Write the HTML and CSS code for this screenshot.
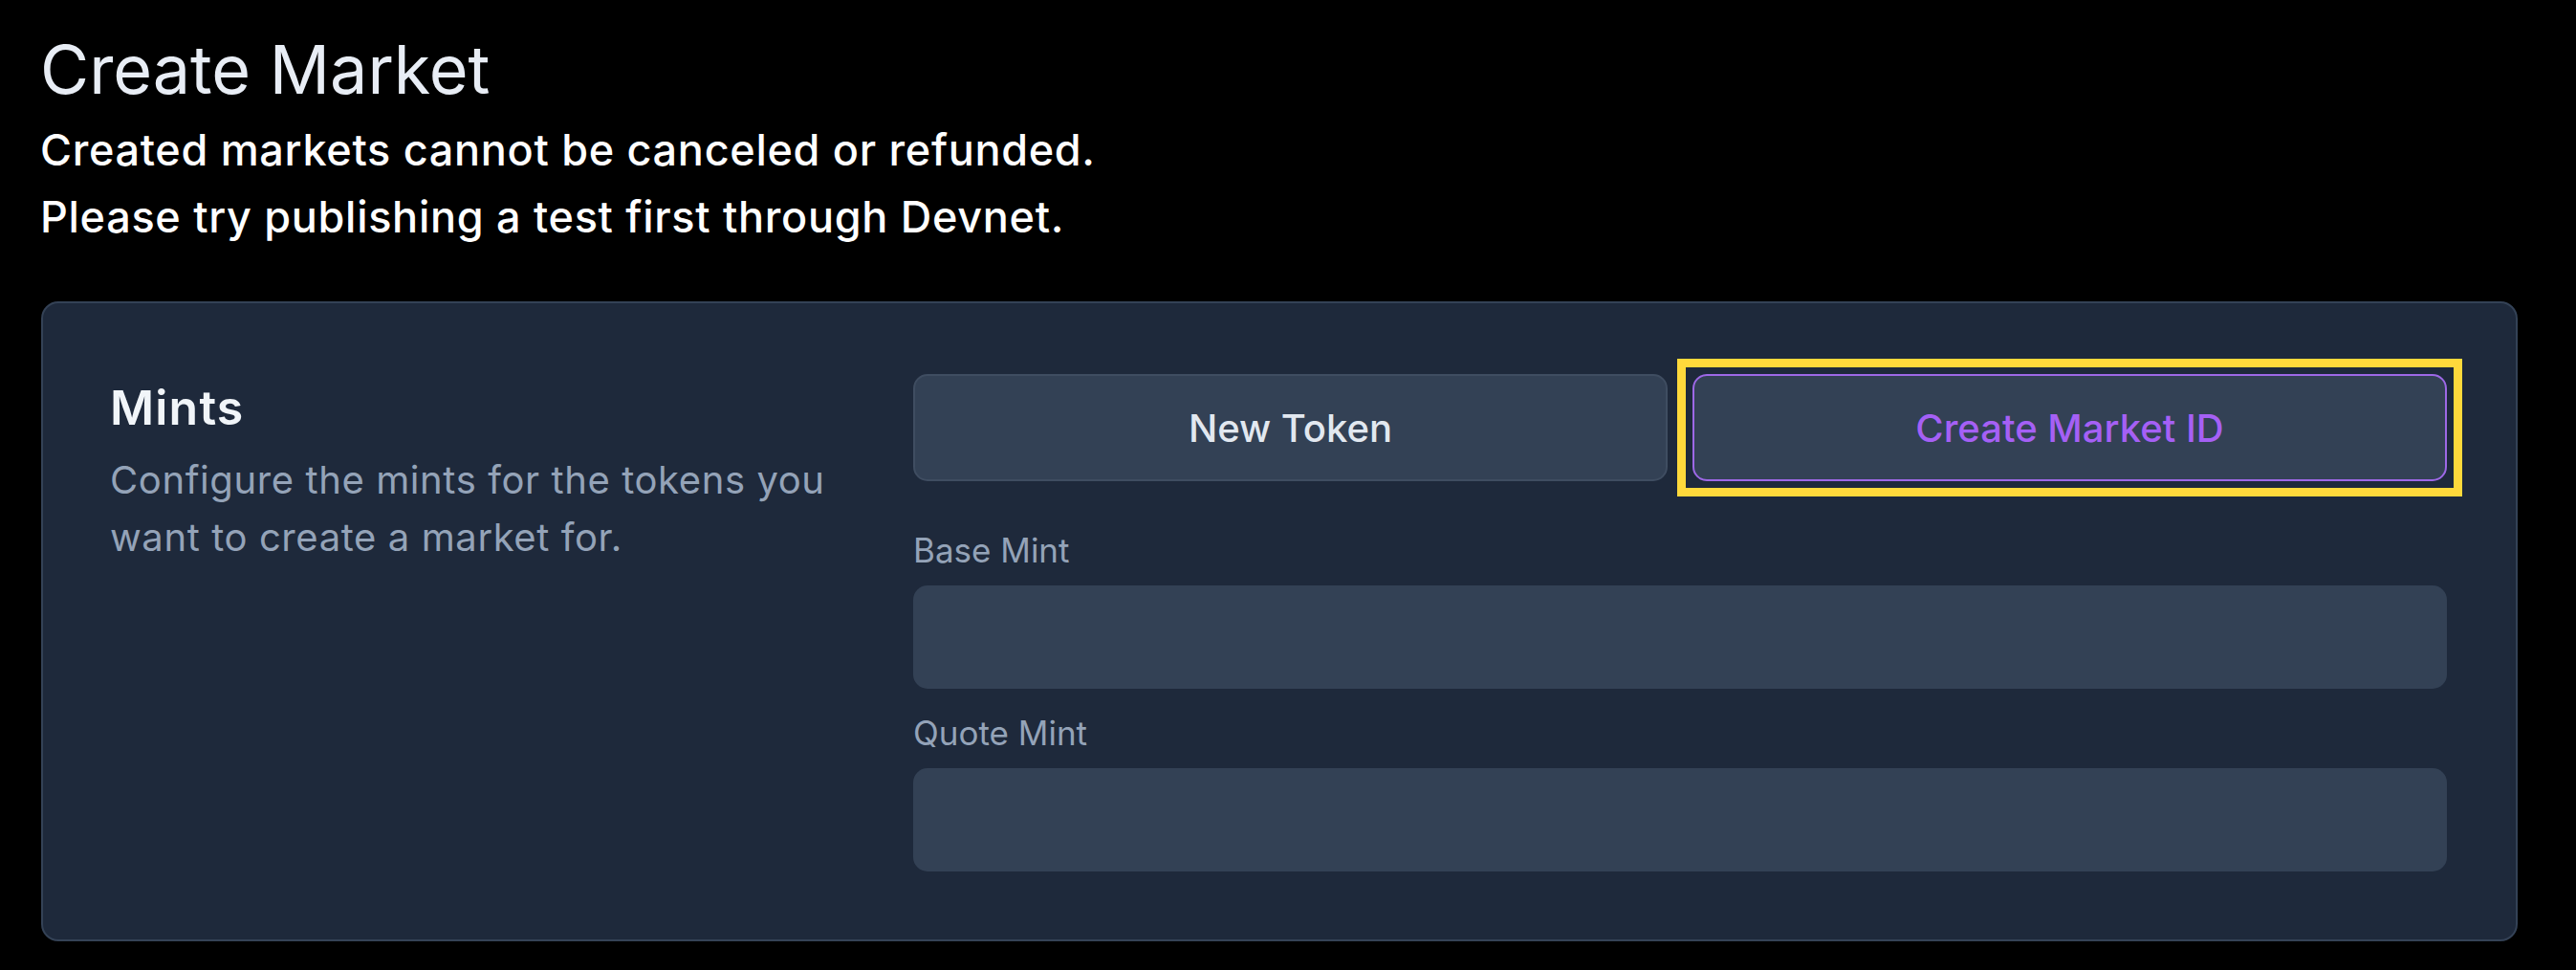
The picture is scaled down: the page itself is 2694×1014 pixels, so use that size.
FILE: index.html
```html
<!DOCTYPE html>
<html lang="en">
<head>
<meta charset="utf-8">
<title>Create Market</title>
<link rel="stylesheet" href="styles.css">
</head>
<body>
<main class="page">
  <header class="intro">
    <h1 class="title">Create Market</h1>
    <p class="notice">Created markets cannot be canceled or refunded.<br>Please try publishing a test first through Devnet.</p>
  </header>

  <section class="card">
    <div class="card-info">
      <h2 class="card-title">Mints</h2>
      <p class="card-desc">Configure the mints for the tokens you want to create a market for.</p>
    </div>
    <div class="card-body">
      <div class="button-row">
        <button class="btn" type="button">New Token</button>
        <div class="focus-ring">
          <button class="btn btn-active" type="button">Create Market ID</button>
        </div>
      </div>
      <div class="field field-first">
        <label class="field-label" for="base-mint">Base Mint</label>
        <input class="field-input" id="base-mint" type="text">
      </div>
      <div class="field">
        <label class="field-label" for="quote-mint">Quote Mint</label>
        <input class="field-input" id="quote-mint" type="text">
      </div>
    </div>
  </section>
</main>
</body>
</html>
```

FILE: styles.css
```css
* {
  box-sizing: border-box;
}

html, body {
  margin: 0;
  padding: 0;
  background: #000000;
}

body {
  font-family: Inter, "Noto Sans", "Liberation Sans", sans-serif;
  color: #f1f5f9;
  width: 2694px;
  height: 1014px;
  overflow: hidden;
}

.page {
  padding: 31px 61px 0 42px;
}

.intro {
  margin: 0;
}

.title {
  margin: 0;
  font-size: 70px;
  line-height: 84px;
  font-weight: 400;
  color: #e8edf5;
  letter-spacing: 0;
}

.notice {
  margin: 7px 0 0 0;
  font-size: 45px;
  line-height: 70px;
  font-weight: 500;
  color: #ffffff;
  letter-spacing: 0.7px;
}

.card {
  margin-top: 53px;
  margin-left: 1px;
  background: #1e293b;
  border: 2px solid #344256;
  border-radius: 18px;
  padding: 74px 72px 71px 70px;
  display: grid;
  grid-template-columns: repeat(3, 1fr);
  column-gap: 76px;
}

.card-info {
  grid-column: span 1;
}

.card-title {
  margin: 0;
  font-size: 50px;
  line-height: 70px;
  font-weight: 600;
  color: #f1f5f9;
  letter-spacing: 1.2px;
}

.card-desc {
  margin: 11px 0 0 0;
  font-size: 40px;
  line-height: 60px;
  font-weight: 400;
  color: #94a3b8;
  letter-spacing: 0.6px;
}

.card-body {
  grid-column: span 2;
  display: flex;
  flex-direction: column;
}

.button-row {
  display: grid;
  grid-template-columns: 1fr 1fr;
  column-gap: 26px;
}

.btn {
  width: 100%;
  height: 112px;
  border-radius: 15px;
  background: #334155;
  border: 2px solid #3f4d61;
  color: #e2e8f0;
  font-family: inherit;
  font-size: 40px;
  font-weight: 500;
  cursor: pointer;
  display: block;
}

.focus-ring {
  margin: -16px;
  padding: 7px;
  border: 9px solid #ffd93b;
}

.btn-active {
  color: #a560f5;
  border-color: #9d68e6;
}

.field {
  display: flex;
  flex-direction: column;
  margin-top: 21px;
}

.field-first {
  margin-top: 47px;
}

.field-label {
  font-size: 35px;
  line-height: 50px;
  color: #94a3b8;
  margin-bottom: 12px;
}

.field-input {
  height: 108px;
  border: none;
  border-radius: 15px;
  background: #334155;
  color: #e2e8f0;
  font-family: inherit;
  font-size: 38px;
  padding: 0 28px;
  outline: none;
}
```
